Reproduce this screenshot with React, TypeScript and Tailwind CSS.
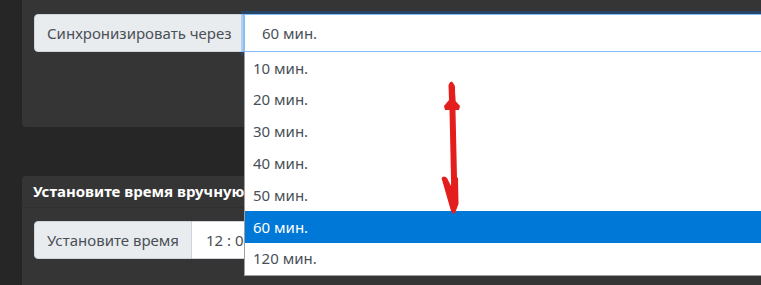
import React from 'react';

const options = ['10 мин.', '20 мин.', '30 мин.', '40 мин.', '50 мин.', '60 мин.', '120 мин.'];

function Arrow() {
    return (
        <svg className="absolute z-20 left-[436px] top-[76px]" width="30" height="142" viewBox="436 76 30 142">
            <path d="M452 88 L454.5 200" stroke="#e41d1d" strokeWidth="6" strokeLinecap="round" fill="none" />
            <path
                d="M448.5 85 Q451 78 454.5 85 L455.5 101 L460 106 L459 110 L445 110 L444 106 L449 100 Z"
                fill="#e41d1d"
            />
            <path
                d="M441.5 178 Q444 175 447 178 L451 186 L452 179 Q455 175 458 178 L458.5 204 L455 213 Q453 215 451 211 Z"
                fill="#e41d1d"
            />
        </svg>
    );
}

export default function App() {
    return (
        <div className="relative w-[761px] h-[285px] overflow-hidden bg-[#262626] pl-[22px] font-['Noto_Sans',sans-serif]">
            <div className="w-[800px] h-[127px] rounded-b bg-[#353535] pt-[14px] pl-3">
                <div className="flex h-[38px] text-[15px]">
                    <span className="flex items-center w-[210px] shrink-0 px-3 whitespace-nowrap bg-[#e9ecef] border border-[#ced4da] rounded-l text-[#495057]">
                        Синхронизировать через
                    </span>
                    <div className="relative z-10 flex-1">
                        <div className="flex items-center h-full pl-[17px] bg-white border border-[#80bdff] shadow-[0_0_0_3px_rgba(0,123,255,0.25)] text-[#495057]">
                            60 мин.
                        </div>
                        <ul className="absolute left-0 top-full w-full bg-white border-l border-b border-[#a0a0a0]">
                            {options.map((o) => (
                                <li
                                    key={o}
                                    className={`flex items-center h-[31.8px] pl-2 ${o === '60 мин.' ? 'bg-[#0078d7] text-white' : 'text-[#495057]'}`}
                                >
                                    {o}
                                </li>
                            ))}
                        </ul>
                    </div>
                </div>
            </div>
            <div className="w-[800px] h-[120px] mt-[49px] rounded-t bg-[#353535]">
                <div className="flex items-center h-[32px] px-[11px] border-b border-[#2f2f2f] text-[15px] font-bold text-white">
                    Установите время вручную
                </div>
                <div className="pt-[13px] pl-3">
                    <div className="flex h-[38px] text-[15px]">
                        <span className="flex items-center w-[158px] shrink-0 px-3 whitespace-nowrap bg-[#e9ecef] border border-[#ced4da] rounded-l text-[#495057]">
                            Установите время
                        </span>
                        <div className="flex items-center flex-1 pl-[14px] bg-white border-y border-r border-[#ced4da] text-[#495057]">
                            12 : 00
                        </div>
                    </div>
                </div>
            </div>
            <Arrow />
        </div>
    );
}
